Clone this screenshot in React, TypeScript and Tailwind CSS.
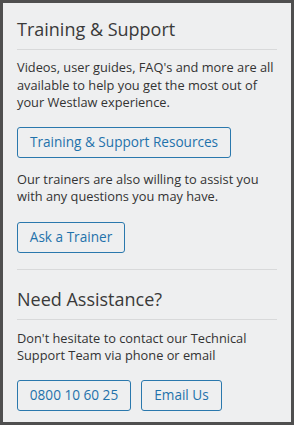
export default function App() {
  const btn =
    "flex h-[31px] items-center justify-center whitespace-nowrap rounded-[3px] border border-[#2a78ad] text-[13.6px] text-[#1f72ab]";
  return (
    <div
      className="h-[425px] w-[294px] border-[3px] border-[#4f4f4f] bg-[#eeeff0] px-[14px] text-[#333333]"
      style={{ fontFamily: '"Open Sans", "Liberation Sans", sans-serif' }}
    >
      <h2 className="pt-[12px] text-[18px] leading-[28px] text-[#3a3a3a]">Training &amp; Support</h2>
      <div className="mt-[6px] border-t border-[#d8d9da]" />
      <p className="mt-[9px] text-[12.8px] leading-[17.5px]">
        Videos, user guides, FAQ's and more are all available to help you get the most out of your
        Westlaw experience.
      </p>
      <div className="mt-[15px] flex">
        <button type="button" className={`${btn} w-[214px]`}>
          Training &amp; Support Resources
        </button>
      </div>
      <p className="mt-[13px] text-[12.8px] leading-[17.5px]">
        Our trainers are also willing to assist you with any questions you may have.
      </p>
      <div className="mt-[16px] flex">
        <button type="button" className={`${btn} w-[108px]`}>
          Ask a Trainer
        </button>
      </div>
      <div className="mt-[16px] border-t border-[#d8d9da]" />
      <h2 className="mt-[15px] text-[18px] leading-[28px] text-[#3a3a3a]">Need Assistance?</h2>
      <div className="mt-[6px] border-t border-[#d8d9da]" />
      <p className="mt-[10px] text-[12.8px] leading-[17.5px]">
        Don't hesitate to contact our Technical Support Team via phone or email
      </p>
      <div className="mt-[15px] flex gap-[10px]">
        <button type="button" className={`${btn} h-[30px] w-[114px]`}>
          0800 10 60 25
        </button>
        <button type="button" className={`${btn} h-[30px] w-[81px]`}>
          Email Us
        </button>
      </div>
    </div>
  );
}
